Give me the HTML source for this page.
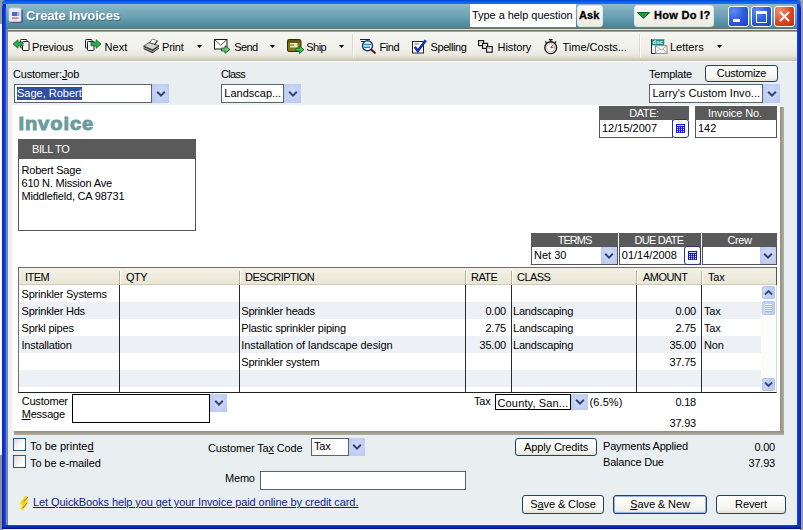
<!DOCTYPE html>
<html>
<head>
<meta charset="utf-8">
<title>Create Invoices</title>
<style>
html,body{margin:0;padding:0;}
body{width:803px;height:530px;overflow:hidden;position:relative;background:#e9eef1;font-family:"Liberation Sans",sans-serif;font-size:11px;line-height:13px;color:#000;}
.a{position:absolute;}
.t{position:absolute;white-space:nowrap;font-size:11px;line-height:13px;letter-spacing:-0.2px;}
.r{text-align:right;}
u{text-decoration:underline;}
/* frame */
#bgl{left:0;top:0;width:3px;height:530px;background:linear-gradient(#8a9ea0 0,#8a9ea0 24px,#f8f9fc 24px,#f8f9fc 455px,#8e8e98 455px);}
#bgr{left:800px;top:0;width:3px;height:530px;background:#9aa0a8;}
#frame{left:2px;top:0;width:799px;height:529px;background:#0a35d6;border-radius:7px 7px 0 0;}
#frametop{left:2px;top:0;width:799px;height:4px;border-radius:7px 7px 0 0;background:linear-gradient(#0044d2 0,#0b5fea 40%,#1274f2 100%);}
#title{left:6px;top:4px;width:791px;height:25px;background:linear-gradient(#93b7c9 0,#7bb3be 18%,#7ba5b8 34%,#68a0b2 52%,#5891a3 75%,#4a8192 100%);}
#inner{left:6px;top:29px;width:791px;height:496px;background:#e9eef1;}
#tsep1{left:6px;top:28px;width:791px;height:1px;background:#5f7672;}
#tsep2{left:6px;top:29px;width:791px;height:1px;background:#dbe6e2;}
#tsep3{left:6px;top:30px;width:791px;height:2px;background:linear-gradient(#727264 50%,#a3a396 50%);}
#ledge{left:6px;top:29px;width:2px;height:496px;background:linear-gradient(90deg,#8198b0,#7d7c70);}
#toolbar{left:8px;top:32px;width:789px;height:29px;background:linear-gradient(#f5f5f1 0,#f1f1eb 55%,#e9e8de 80%,#d3d0c0 94%,#bdb9a8 100%);}
#tbw{left:8px;top:61px;width:789px;height:1px;background:#fdfdfb;}
.vsep{width:1px;top:34px;height:24px;background:#dcd9cc;box-shadow:1px 0 0 #fdfdfb;}
/* title bar controls */
#help{left:470px;top:4px;width:106px;height:23px;background:#fff;}
.tb{border-radius:3px;background:linear-gradient(#fbfbf8,#ecebe2);border:1px solid #dfe6e6;box-sizing:border-box;}
.wb{width:21px;height:21px;top:6px;border-radius:3px;border:1px solid #fff;box-sizing:border-box;}
.wbb{background:radial-gradient(circle at 25% 20%,#5f8cf2 0,#2f5ce0 50%,#1b3fbe 100%);}
.wbr{background:radial-gradient(circle at 25% 20%,#f09472 0,#e0451e 55%,#b92d11 100%);}
/* combos */
.in{background:#fff;border:1px solid #5c626c;box-sizing:border-box;}
.dd{background:radial-gradient(ellipse at 50% 45%,#cbdcfb 0,#c0cdf3 70%,#b9c6ee 100%);box-sizing:border-box;}
.dd svg{position:absolute;left:50%;top:50%;margin:-4px 0 0 -5px;}
.btn{border:1px solid #24415f;border-radius:3px;background:linear-gradient(#ffffff,#f3f3ee 80%,#e3e2d8);box-sizing:border-box;text-align:center;font-size:11px;line-height:16px;letter-spacing:-0.1px;}
.hd{background:#5a5a5a;color:#fff;text-align:center;font-size:11px;line-height:15px;box-sizing:border-box;z-index:2;letter-spacing:-0.4px;}
.cal{background:#fff;border:1px solid #24348c;border-radius:3px;box-sizing:border-box;}
.row{left:19px;width:742px;height:17px;}
.cl{width:1px;top:285px;height:107px;background:#2a2a2a;}
.hl{width:1px;top:271px;height:13px;background:#b5b19c;box-shadow:1px 0 0 #fff;}
.cb{width:13px;height:13px;border:1px solid #2a5a84;box-sizing:border-box;background:linear-gradient(135deg,#dcdcd4,#fff 70%);}
</style>
</head>
<body>
<div class="a" id="bgl"></div>
<div class="a" id="bgr"></div>
<div class="a" style="left:0;top:0;width:12px;height:12px;background:#8a9ea0"></div><div class="a" style="left:791px;top:0;width:12px;height:12px;background:#9aa4a6"></div>
<div class="a" id="frame"></div>
<div class="a" style="left:2px;top:8px;width:4px;height:517px;background:linear-gradient(90deg,#0626c8,#0c34d8 50%,#1e4ee6)"></div><div class="a" style="left:797px;top:8px;width:4px;height:517px;background:linear-gradient(90deg,#1a48e4,#0c30d0 50%,#0420b0)"></div>
<div class="a" id="frametop"></div>
<div class="a" id="title"></div>
<div class="a" id="inner"></div>
<div class="a" id="tsep1"></div><div class="a" id="tsep2"></div><div class="a" id="tsep3"></div>
<div class="a" id="toolbar"></div>
<div class="a" id="tbw"></div>
<div class="a" id="ledge"></div>

<!-- TITLE BAR -->
<svg class="a" style="left:8px;top:7px" width="16" height="17" viewBox="0 0 16 17">
 <rect x="2.5" y="2.5" width="12.5" height="13.5" rx="1.5" fill="#4a5a8c"/>
 <rect x="1" y="1" width="12" height="13.5" rx="1.2" fill="#f0edf8" stroke="#c4c6e4" stroke-width="0.8"/>
 <rect x="4" y="5" width="6.5" height="4" fill="#4f6cbc"/>
 <rect x="9" y="5" width="2.5" height="4" fill="#9fb0e0"/>
 <rect x="4" y="10.3" width="6.5" height="1.6" fill="#dc7a86"/>
 <rect x="4" y="12.5" width="5" height="0.8" fill="#c8c4e0"/>
</svg>
<div class="t" style="left:26px;top:8px;font-size:13px;line-height:16px;font-weight:bold;color:#fff;letter-spacing:-0.15px;text-shadow:1px 1px 0 rgba(40,80,95,.6)">Create Invoices</div>
<div class="a" id="help"></div>
<div class="t" style="left:472px;top:9px;letter-spacing:-0.05px">Type a help question</div>
<div class="a tb" style="left:577px;top:5px;width:26px;height:22px;"></div>
<div class="t" style="left:579px;top:9px;font-weight:bold;font-size:11px;letter-spacing:0.1px;-webkit-text-stroke:0.3px #000">Ask</div>
<div class="a tb" style="left:634px;top:5px;width:80px;height:22px;"></div>
<svg class="a" style="left:637px;top:12px" width="13" height="7" viewBox="0 0 13 7"><path d="M0.5 0.5 L12.5 0.5 L6.5 6.5 Z" fill="#1f9a3c" stroke="#0d6a24" stroke-width="1"/></svg>
<div class="t" style="left:654px;top:9px;font-weight:bold;font-size:11px;letter-spacing:0.3px;-webkit-text-stroke:0.3px #000">How Do I?</div>
<div class="a wb wbb" style="left:728px;"><div class="a" style="left:4px;top:12px;width:7px;height:3px;background:#fff"></div></div>
<div class="a wb wbb" style="left:751px;"><div class="a" style="left:4px;top:4px;width:9px;height:8px;border:1px solid #fff;border-top-width:3px;"></div></div>
<div class="a wb wbr" style="left:774px;"><svg class="a" style="left:3px;top:3px" width="13" height="13" viewBox="0 0 13 13"><path d="M2.5 2.5 L10.5 10.5 M10.5 2.5 L2.5 10.5" stroke="#fff" stroke-width="2" stroke-linecap="round"/></svg></div>

<!-- TOOLBAR -->

<!-- Previous -->
<svg class="a" style="left:12px;top:37px" width="18" height="16" viewBox="0 0 18 16">
 <rect x="8.5" y="2.5" width="6.5" height="8.5" rx="0.8" fill="#fff" stroke="#1a1a1a"/>
 <rect x="10.5" y="4.5" width="6.5" height="9" rx="0.8" fill="#fff" stroke="#1a1a1a"/>
 <path d="M1.2 7 L6 2.8 L6 5.2 L11 5.2 L11 8.8 L6 8.8 L6 11.2 Z" fill="#2fae4a" stroke="#0d6e28" stroke-width="0.9"/>
</svg>
<div class="t" style="left:32px;top:41px">Previous</div>
<!-- Next -->
<svg class="a" style="left:84px;top:37px" width="18" height="16" viewBox="0 0 18 16">
 <rect x="1.5" y="2.5" width="6.5" height="8.5" rx="0.8" fill="#fff" stroke="#1a1a1a"/>
 <rect x="3.5" y="4.5" width="6.5" height="9" rx="0.8" fill="#fff" stroke="#1a1a1a"/>
 <path d="M17 7 L12.2 2.8 L12.2 5.2 L7 5.2 L7 8.8 L12.2 8.8 L12.2 11.2 Z" fill="#2fae4a" stroke="#0d6e28" stroke-width="0.9"/>
</svg>
<div class="t" style="left:104.5px;top:41px;letter-spacing:0.1px">Next</div>
<!-- Print -->
<svg class="a" style="left:143px;top:38px" width="17" height="16" viewBox="0 0 17 16">
 <path d="M6.5 4.5 L9.5 1 L14.5 2.8 L11 7 Z" fill="#fff" stroke="#555" stroke-width="0.8"/>
 <path d="M0.7 8 L6 4.6 L16 7.6 L9.5 11.8 Z" fill="#d2d2d0" stroke="#3a3a3a" stroke-width="0.8"/>
 <path d="M11 7 L14.5 2.8" stroke="#222" stroke-width="1"/>
 <path d="M0.7 8 L9.5 11.8 L16 7.6 L16 10.6 L9.5 15.2 L0.7 11.2 Z" fill="#2e2e2e"/>
 <path d="M0.7 9.6 L9.5 13.5 L16 9.1" fill="none" stroke="#c8c8c4" stroke-width="0.9"/>
</svg>
<div class="t" style="left:162px;top:41px">Print</div>
<svg class="a" style="left:197px;top:45px" width="5" height="3" viewBox="0 0 5 3"><path d="M0 0 L5 0 L2.5 3 Z" fill="#000"/></svg>
<!-- Send -->
<svg class="a" style="left:213px;top:37px" width="19" height="18" viewBox="0 0 19 18">
 <rect x="1.5" y="2.5" width="12.5" height="9.5" fill="#fff" stroke="#1a1a1a"/>
 <path d="M1.5 2.5 L7.7 8.3 L14 2.5" fill="none" stroke="#333" stroke-width="0.8"/>
 <path d="M8.5 11 L12 11 L12 8.6 L17 12.5 L12 16.4 L12 14 L8.5 14 Z" fill="#69c274" stroke="#1a5e2c" stroke-width="0.9"/>
</svg>
<div class="t" style="left:234.3px;top:41px;letter-spacing:-0.6px">Send</div>
<svg class="a" style="left:270px;top:45px" width="5" height="3" viewBox="0 0 5 3"><path d="M0 0 L5 0 L2.5 3 Z" fill="#000"/></svg>
<!-- Ship -->
<svg class="a" style="left:286px;top:37px" width="19" height="18" viewBox="0 0 19 18">
 <rect x="1.5" y="2.5" width="13.5" height="12" rx="1.5" fill="#7d7718" stroke="#34300a"/>
 <rect x="2" y="3" width="12.5" height="2.6" fill="#5a5510"/>
 <rect x="4" y="6" width="7.5" height="4.5" fill="#ece8c0"/>
 <rect x="4" y="7.5" width="4" height="1.2" fill="#7d7718"/>
 <path d="M10 11.3 L13.5 11.3 L13.5 9 L18 12.7 L13.5 16.4 L13.5 14 L10 14 Z" fill="#3fc454" stroke="#0f6a26" stroke-width="0.9"/>
</svg>
<div class="t" style="left:306.3px;top:41px;letter-spacing:-0.55px">Ship</div>
<svg class="a" style="left:339px;top:45px" width="5" height="3" viewBox="0 0 5 3"><path d="M0 0 L5 0 L2.5 3 Z" fill="#000"/></svg>
<div class="a vsep" style="left:352px"></div>
<!-- Find -->
<svg class="a" style="left:358px;top:37px" width="20" height="18" viewBox="0 0 20 18">
 <path d="M2 2.5 L12 2.5 M3 4.5 L8 4.5" stroke="#222" stroke-width="1"/>
 <circle cx="9.5" cy="8.8" r="5" fill="#f2f8ff" stroke="#1b3a94" stroke-width="1.5"/>
 <path d="M5.5 7.6 L13 7.6 M5.8 10.2 L12 10.2" stroke="#1a9aa0" stroke-width="1.5"/>
 <path d="M13.4 12.8 L16.8 15.8" stroke="#5a1a10" stroke-width="2.2" stroke-linecap="round"/>
</svg>
<div class="t" style="left:379.5px;top:41px;letter-spacing:-0.4px">Find</div>
<!-- Spelling -->
<svg class="a" style="left:411px;top:37px" width="18" height="18" viewBox="0 0 18 18">
 <rect x="1.5" y="4.5" width="11" height="11.5" fill="#fff" stroke="#222"/>
 <path d="M3.5 7 L8 7" stroke="#666" stroke-width="1"/>
 <path d="M3.8 9.8 L6.8 14 L14.8 3.2" fill="none" stroke="#1630b4" stroke-width="2.6" stroke-linejoin="miter"/>
</svg>
<div class="t" style="left:430.5px;top:41px;letter-spacing:-0.4px">Spelling</div>
<!-- History -->
<svg class="a" style="left:477px;top:38px" width="17" height="16" viewBox="0 0 17 16">
 <rect x="1.6" y="2.6" width="5" height="5" fill="#fff" stroke="#1a1a1a" stroke-width="1.2"/>
 <rect x="5.6" y="5.4" width="5" height="5" fill="#fff" stroke="#1a1a1a" stroke-width="1.2"/>
 <rect x="9.6" y="8.6" width="5.6" height="5.6" fill="#fff" stroke="#1a1a1a" stroke-width="1.2"/>
 <path d="M3 4.3 L5 4.3 M7 7.2 L9 7.2 M11.2 10.6 L13.5 10.6" stroke="#999" stroke-width="0.8"/>
</svg>
<div class="t" style="left:497.6px;top:41px;letter-spacing:-0.1px">History</div>
<!-- Time/Costs -->
<svg class="a" style="left:542px;top:38px" width="17" height="17" viewBox="0 0 17 17">
 <path d="M6.8 1.7 L10.6 1.7 M8.7 1.7 L8.7 3.6 M3.2 3.4 L4.6 4.8 M14.2 3.4 L12.8 4.8" stroke="#1a1a1a" stroke-width="1.3"/>
 <circle cx="8.7" cy="9.7" r="5.9" fill="#fff" stroke="#1a1a1a" stroke-width="1.4"/>
 <circle cx="8.7" cy="9.7" r="4" fill="none" stroke="#6a3a3a" stroke-width="0.9" stroke-dasharray="0.9 1.2"/>
 <path d="M8.7 9.7 L11.2 6.8 M8.7 9.7 L11.5 9.7" stroke="#c81e1e" stroke-width="1"/>
</svg>
<div class="t" style="left:562.5px;top:41px;letter-spacing:0">Time/Costs...</div>
<div class="a vsep" style="left:639px"></div>
<!-- Letters -->
<svg class="a" style="left:651px;top:39px" width="18" height="16" viewBox="0 0 18 16">
 <rect x="0.5" y="0.5" width="12.5" height="14" fill="#f6f8f8" stroke="#9ab"/>
 <path d="M0.5 0.5 L0.5 14.5 L5 14.5" fill="none" stroke="#223" stroke-width="1"/>
 <rect x="1" y="0.5" width="12" height="5.8" fill="#1f8a88"/>
 <text x="1.6" y="5.2" font-family="Liberation Sans, sans-serif" font-size="5.5" font-weight="bold" fill="#fff" letter-spacing="0.2">doc</text>
 <rect x="4.5" y="6.7" width="11.5" height="7.6" fill="#fff" stroke="#8a8a8a"/>
 <path d="M4.5 6.7 L10.2 11 L16 6.7 M4.5 14.3 L8.5 10 M16 14.3 L12 10" fill="none" stroke="#9a9a9a" stroke-width="0.8"/>
</svg>
<div class="t" style="left:670px;top:41px;letter-spacing:0">Letters</div>
<svg class="a" style="left:717px;top:45px" width="5" height="3" viewBox="0 0 5 3"><path d="M0 0 L5 0 L2.5 3 Z" fill="#000"/></svg>


<!-- FORM -->
<div class="t" style="left:13px;top:68px">Customer:<u>J</u>ob</div>
<div class="a in" style="left:14px;top:84px;width:138px;height:19px"></div>
<div class="a" style="left:17px;top:87px;width:65px;height:13px;background:#2f519d"></div>
<div class="t" style="left:17px;top:87px;color:#fff;letter-spacing:0">Sage, Robert</div>
<div class="a dd" style="left:152px;top:84px;width:17px;height:19px"><svg width="10" height="8" viewBox="0 0 10 8"><path d="M1.2 1.8 L5 5.6 L8.8 1.8" fill="none" stroke="#36426e" stroke-width="2"/></svg></div>
<div class="t" style="left:221px;top:68px;letter-spacing:-0.7px">Class</div>
<div class="a in" style="left:221px;top:84px;width:63px;height:19px"></div>
<div class="t" style="left:224.3px;top:87px;letter-spacing:0">Landscap...</div>
<div class="a dd" style="left:284px;top:84px;width:17px;height:19px"><svg width="10" height="8" viewBox="0 0 10 8"><path d="M1.2 1.8 L5 5.6 L8.8 1.8" fill="none" stroke="#36426e" stroke-width="2"/></svg></div>
<div class="t" style="left:649px;top:68px">Template</div>
<div class="a btn" style="left:705px;top:65px;width:73px;height:17px;line-height:15px;letter-spacing:-0.3px">Customize</div>
<div class="a in" style="left:649px;top:84px;width:114px;height:19px"></div>
<div class="t" style="left:652.4px;top:87px;letter-spacing:0.05px">Larry's Custom Invo...</div>
<div class="a dd" style="left:763px;top:84px;width:17px;height:19px"><svg width="10" height="8" viewBox="0 0 10 8"><path d="M1.2 1.8 L5 5.6 L8.8 1.8" fill="none" stroke="#36426e" stroke-width="2"/></svg></div>
<div class="a" style="left:780px;top:107px;width:4px;height:328px;background:linear-gradient(90deg,#8f8d80,#a19f92 50%,#b2b0a4)"></div><div class="a" style="left:14px;top:431px;width:770px;height:4px;background:linear-gradient(#8f8d80,#a19f92 50%,#b2b0a4)"></div>
<div class="a" style="left:12px;top:105px;width:768px;height:326px;background:#fff"></div>
<div class="t" style="left:19px;top:113px;font-size:18px;line-height:24px;font-weight:bold;color:#6b9c9c;letter-spacing:0.8px;-webkit-text-stroke:0.9px #6b9c9c;transform-origin:0 50%;transform:translate(-0.6px,-0.6px) scaleX(1.12)">Invoice</div>
<div class="a" style="left:18px;top:139px;width:178px;height:92px;border:1px solid #555;box-sizing:border-box;background:#fff"></div>
<div class="a hd" style="left:18px;top:139px;width:178px;height:20px;text-align:left;padding:3px 0 0 14px;letter-spacing:-0.4px">BILL TO</div>
<div class="t" style="left:21.5px;top:164px">Robert Sage</div>
<div class="t" style="left:21.5px;top:177px">610 N. Mission Ave</div>
<div class="t" style="left:21.5px;top:190px">Middlefield, CA 98731</div>
<div class="a hd" style="left:599px;top:106px;width:90px;height:14px;line-height:15px">DATE:</div>
<div class="a in" style="left:599px;top:119px;width:74px;height:19px;border-color:#555"></div>
<div class="t" style="left:602px;top:122px;letter-spacing:0">12/15/2007</div>
<div class="a cal" style="left:672px;top:119px;width:17px;height:19px;z-index:3"><svg class="a" style="left:3px;top:4px" width="9" height="9" viewBox="0 0 9 9"><rect x="0" y="0" width="9" height="9" fill="#1414d4"/><rect x="1" y="1" width="7" height="1" fill="#c8d0ff"/><rect x="1.0" y="3.2" width="1" height="1" fill="#fff"/><rect x="3.0" y="3.2" width="1" height="1" fill="#fff"/><rect x="5.0" y="3.2" width="1" height="1" fill="#fff"/><rect x="7.0" y="3.2" width="1" height="1" fill="#fff"/><rect x="1.0" y="5.2" width="1" height="1" fill="#fff"/><rect x="3.0" y="5.2" width="1" height="1" fill="#fff"/><rect x="5.0" y="5.2" width="1" height="1" fill="#fff"/><rect x="7.0" y="5.2" width="1" height="1" fill="#fff"/><rect x="1.0" y="7.2" width="1" height="1" fill="#fff"/><rect x="3.0" y="7.2" width="1" height="1" fill="#fff"/><rect x="5.0" y="7.2" width="1" height="1" fill="#fff"/><rect x="7.0" y="7.2" width="1" height="1" fill="#fff"/></svg></div>
<div class="a hd" style="left:695px;top:106px;width:82px;height:14px;line-height:15px;letter-spacing:-0.1px;padding-right:2px">Invoice No.</div>
<div class="a in" style="left:695px;top:119px;width:82px;height:19px;border-color:#555"></div>
<div class="t" style="left:698px;top:122px;letter-spacing:0">142</div>
<div class="a hd" style="left:531px;top:233px;width:87px;height:13px;letter-spacing:-1px">TERMS</div>
<div class="a in" style="left:531px;top:246px;width:87px;height:19px;border-color:#555"></div>
<div class="t" style="left:534px;top:249px;letter-spacing:0">Net 30</div>
<div class="a dd" style="left:601px;top:247px;width:16px;height:17px"><svg width="10" height="8" viewBox="0 0 10 8"><path d="M1.2 1.8 L5 5.6 L8.8 1.8" fill="none" stroke="#36426e" stroke-width="2"/></svg></div>
<div class="a hd" style="left:619px;top:233px;width:82px;height:13px;letter-spacing:-0.75px;padding-right:2px">DUE DATE</div>
<div class="a in" style="left:619px;top:246px;width:82px;height:19px;border-color:#555"></div>
<div class="t" style="left:621.8px;top:249px;letter-spacing:0">01/14/2008</div>
<div class="a cal" style="left:684px;top:246px;width:17px;height:19px;z-index:3"><svg class="a" style="left:3px;top:4px" width="9" height="9" viewBox="0 0 9 9"><rect x="0" y="0" width="9" height="9" fill="#1414d4"/><rect x="1" y="1" width="7" height="1" fill="#c8d0ff"/><rect x="1.0" y="3.2" width="1" height="1" fill="#fff"/><rect x="3.0" y="3.2" width="1" height="1" fill="#fff"/><rect x="5.0" y="3.2" width="1" height="1" fill="#fff"/><rect x="7.0" y="3.2" width="1" height="1" fill="#fff"/><rect x="1.0" y="5.2" width="1" height="1" fill="#fff"/><rect x="3.0" y="5.2" width="1" height="1" fill="#fff"/><rect x="5.0" y="5.2" width="1" height="1" fill="#fff"/><rect x="7.0" y="5.2" width="1" height="1" fill="#fff"/><rect x="1.0" y="7.2" width="1" height="1" fill="#fff"/><rect x="3.0" y="7.2" width="1" height="1" fill="#fff"/><rect x="5.0" y="7.2" width="1" height="1" fill="#fff"/><rect x="7.0" y="7.2" width="1" height="1" fill="#fff"/></svg></div>
<div class="a hd" style="left:702px;top:233px;width:75px;height:13px">Crew</div>
<div class="a in" style="left:702px;top:246px;width:75px;height:19px;border-color:#555"></div>
<div class="a dd" style="left:760px;top:247px;width:16px;height:17px"><svg width="10" height="8" viewBox="0 0 10 8"><path d="M1.2 1.8 L5 5.6 L8.8 1.8" fill="none" stroke="#36426e" stroke-width="2"/></svg></div>
<div class="a" style="left:18px;top:267px;width:759px;height:126px;border:1px solid #6e6e6e;border-bottom-color:#222;border-right-color:#d4d8ea;box-sizing:border-box;background:#fff"></div><div class="a" style="left:776px;top:267px;width:1px;height:18px;background:#555"></div>
<div class="a" style="left:19px;top:268px;width:757px;height:17px;background:linear-gradient(#f3f1e6,#e9e6d6);border-bottom:1px solid #cfcbb8;box-sizing:border-box"></div>
<div class="a row" style="top:285px;background:#fff;height:17px"></div>
<div class="a row" style="top:302px;background:#edf1f6;height:17px"></div>
<div class="a row" style="top:319px;background:#fff;height:17px"></div>
<div class="a row" style="top:336px;background:#edf1f6;height:17px"></div>
<div class="a row" style="top:353px;background:#fff;height:17px"></div>
<div class="a row" style="top:370px;background:#edf1f6;height:17px"></div>
<div class="a row" style="top:387px;height:5px;background:#fff"></div>
<div class="a cl" style="left:119px"></div>
<div class="a hl" style="left:119px"></div>
<div class="a cl" style="left:239px"></div>
<div class="a hl" style="left:239px"></div>
<div class="a cl" style="left:465px"></div>
<div class="a hl" style="left:465px"></div>
<div class="a cl" style="left:511px"></div>
<div class="a hl" style="left:511px"></div>
<div class="a cl" style="left:636px"></div>
<div class="a hl" style="left:636px"></div>
<div class="a cl" style="left:701px"></div>
<div class="a hl" style="left:701px"></div>
<div class="t" style="left:25px;top:271px;letter-spacing:-0.55px">ITEM</div>
<div class="t" style="left:126px;top:271px;letter-spacing:-0.55px">QTY</div>
<div class="t" style="left:245px;top:271px;letter-spacing:-0.55px">DESCRIPTION</div>
<div class="t" style="left:471px;top:271px;letter-spacing:-0.55px">RATE</div>
<div class="t" style="left:517px;top:271px;letter-spacing:-0.55px">CLASS</div>
<div class="t" style="left:643px;top:271px;letter-spacing:-0.55px">AMOUNT</div>
<div class="t" style="left:708px;top:271px">Tax</div>
<div class="t" style="left:21.5px;top:288px">Sprinkler Systems</div>
<div class="t" style="left:21.5px;top:305px">Sprinkler Hds</div>
<div class="t" style="left:241.3px;top:305px">Sprinkler heads</div>
<div class="t r" style="left:466px;width:40px;top:305px">0.00</div>
<div class="t" style="left:513px;top:305px">Landscaping</div>
<div class="t r" style="left:640px;width:56px;top:305px">0.00</div>
<div class="t" style="left:704px;top:305px">Tax</div>
<div class="t" style="left:21.5px;top:322px">Sprkl pipes</div>
<div class="t" style="left:241.3px;top:322px">Plastic sprinkler piping</div>
<div class="t r" style="left:466px;width:40px;top:322px">2.75</div>
<div class="t" style="left:513px;top:322px">Landscaping</div>
<div class="t r" style="left:640px;width:56px;top:322px">2.75</div>
<div class="t" style="left:704px;top:322px">Tax</div>
<div class="t" style="left:21.5px;top:339px">Installation</div>
<div class="t" style="left:241.3px;top:339px;letter-spacing:-0.07px">Installation of landscape design</div>
<div class="t r" style="left:466px;width:40px;top:339px">35.00</div>
<div class="t" style="left:513px;top:339px">Landscaping</div>
<div class="t r" style="left:640px;width:56px;top:339px">35.00</div>
<div class="t" style="left:704px;top:339px">Non</div>
<div class="t" style="left:241.3px;top:356px">Sprinkler system</div>
<div class="t r" style="left:640px;width:56px;top:356px">37.75</div>
<div class="a" style="left:761px;top:285px;width:15px;height:107px;background:#fcfcf9"></div>
<div class="a" style="left:762px;top:286px;width:13px;height:13px;border:1px solid #b4c4ee;border-radius:2px;background:linear-gradient(90deg,#cbd8fb,#b9c9f5);box-sizing:border-box"><svg class="a" style="left:1px;top:2px" width="9" height="7" viewBox="0 0 9 7"><path d="M1 5.5 L4.5 2 L8 5.5" fill="none" stroke="#3a4878" stroke-width="1.9"/></svg></div>
<div class="a" style="left:762px;top:301px;width:13px;height:14px;border:1px solid #b4c4ee;border-radius:2px;background:linear-gradient(90deg,#cbd8fb,#b9c9f5);box-sizing:border-box"><div class="a" style="left:2px;top:2px;width:7px;height:8px;background:repeating-linear-gradient(#eef3ff 0,#eef3ff 1px,#9db1e8 1px,#9db1e8 2px)"></div></div>
<div class="a" style="left:762px;top:378px;width:13px;height:13px;border:1px solid #b4c4ee;border-radius:2px;background:linear-gradient(90deg,#cbd8fb,#b9c9f5);box-sizing:border-box"><svg class="a" style="left:1px;top:2px" width="9" height="7" viewBox="0 0 9 7"><path d="M1 1.5 L4.5 5 L8 1.5" fill="none" stroke="#3a4878" stroke-width="1.9"/></svg></div>
<div class="t" style="left:21.7px;top:395px">Customer</div>
<div class="t" style="left:21.7px;top:408px"><u>M</u>essage</div>
<div class="a" style="left:72px;top:394px;width:138px;height:29px;border:1px solid #000;box-sizing:border-box;background:#fff"></div>
<div class="a dd" style="left:210px;top:394px;width:17px;height:18px"><svg width="10" height="8" viewBox="0 0 10 8"><path d="M1.2 1.8 L5 5.6 L8.8 1.8" fill="none" stroke="#36426e" stroke-width="2"/></svg></div>
<div class="t" style="left:474px;top:395px">Tax</div>
<div class="a" style="left:495px;top:394px;width:76px;height:16px;border:1px solid #000;box-sizing:border-box;background:#fff"></div>
<div class="t" style="left:497.5px;top:397px;letter-spacing:0.15px">County, San...</div>
<div class="a dd" style="left:571px;top:394px;width:17px;height:16px"><svg width="10" height="8" viewBox="0 0 10 8"><path d="M1.2 1.8 L5 5.6 L8.8 1.8" fill="none" stroke="#36426e" stroke-width="2"/></svg></div>
<div class="t" style="left:589.5px;top:396px;letter-spacing:0.1px">(6.5%)</div>
<div class="t r" style="left:640px;width:56px;top:396px">0.18</div>
<div class="t r" style="left:640px;width:56px;top:417px">37.93</div>
<div class="a cb" style="left:13px;top:438px"></div>
<div class="a cb" style="left:13px;top:455px"></div>
<div class="t" style="left:30px;top:440px;letter-spacing:0">To be printe<u>d</u></div>
<div class="t" style="left:30px;top:457px;letter-spacing:-0.1px">To be e-mailed</div>
<div class="t" style="left:208px;top:442px;letter-spacing:-0.15px">Customer Ta<u>x</u> Code</div>
<div class="a in" style="left:311px;top:438px;width:38px;height:18px"></div>
<div class="t" style="left:314px;top:440px">Tax</div>
<div class="a dd" style="left:349px;top:438px;width:16px;height:18px"><svg width="10" height="8" viewBox="0 0 10 8"><path d="M1.2 1.8 L5 5.6 L8.8 1.8" fill="none" stroke="#36426e" stroke-width="2"/></svg></div>
<div class="t" style="left:225px;top:472px">Memo</div>
<div class="a in" style="left:260px;top:471px;width:206px;height:19px"></div>
<div class="a btn" style="left:515px;top:438px;width:82px;height:18px">Apply Credits</div>
<div class="t" style="left:603px;top:440px">Payments Applied</div>
<div class="t" style="left:603px;top:456px">Balance Due</div>
<div class="t r" style="left:715px;width:60px;top:441px">0.00</div>
<div class="t r" style="left:715px;width:60px;top:457px">37.93</div>
<svg class="a" style="left:20px;top:496px" width="10" height="14" viewBox="0 0 10 14"><path d="M7 0.5 L2 7 L5.5 7 L1.5 13.5" fill="none" stroke="#f5d400" stroke-width="3.2"/><path d="M8 1 L4 5.5 M7 7 L3 12" stroke="#b45a10" stroke-width="0.9"/></svg>
<div class="t" style="left:33px;top:496px;color:#0f1c86;text-decoration:underline;letter-spacing:-0.08px">Let QuickBooks help you get your Invoice paid online by credit card.</div>
<div class="a btn" style="left:522px;top:495px;width:82px;height:19px;line-height:17px">S<u>a</u>ve &amp; Close</div>
<div class="a btn" style="left:613px;top:495px;width:94px;height:19px;line-height:17px;border-color:#1c3a8a;box-shadow:inset 0 0 0 1px #9db4ee"><u>S</u>ave &amp; New</div>
<div class="a btn" style="left:716px;top:495px;width:70px;height:19px;line-height:17px">Revert</div>
<div class="a" style="left:8px;top:524px;width:789px;height:1px;background:#f4fcff"></div><div class="a" style="left:2px;top:525px;width:799px;height:4px;background:linear-gradient(#1840c8,#0c2cb0 50%,#000c84)"></div>

</body>
</html>
